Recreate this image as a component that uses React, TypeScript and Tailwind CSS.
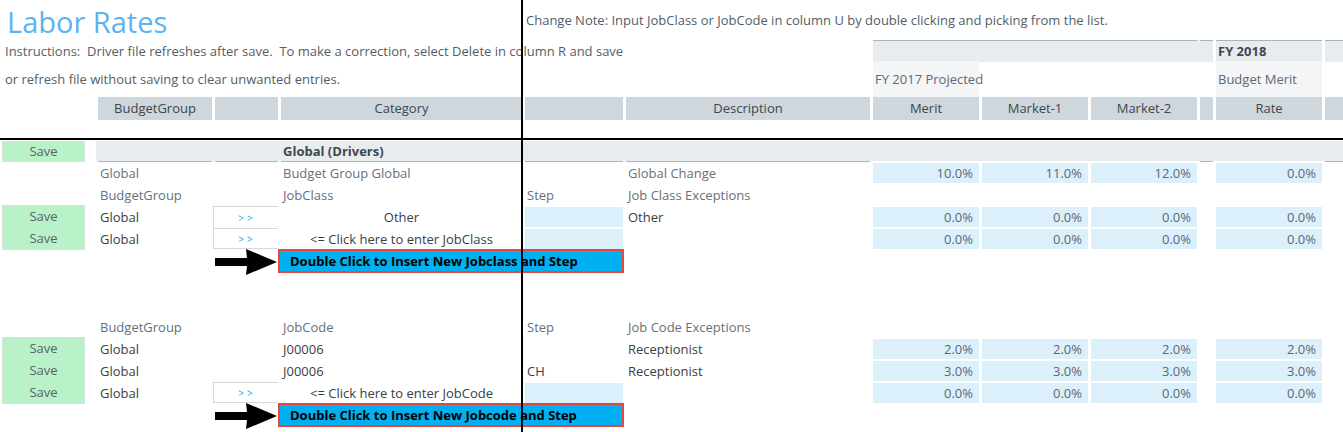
import React from "react";

const GRID =
  "grid grid-cols-[93px_114px_63px_241px_98px_244px_106px_106px_106px_13px_106px_18px] gap-x-[3px] pl-[2px]";

function Save({ first }: { first?: boolean }) {
  return (
    <div
      className={
        first
          ? "w-[83px] h-[21px] pt-[1px] bg-[#b9f1c9] border border-[#d2e6d6] flex items-center justify-center text-[#5b6168]"
          : "w-[83px] h-[23px] -mt-[2px] pt-[1px] bg-[#b9f1c9] border border-[#d2e6d6] flex items-center justify-center text-[#5b6168]"
      }
    >
      Save
    </div>
  );
}

function Pct({ v }: { v: string }) {
  return (
    <div className="h-[20px] pt-[1px] bg-[#dcf0fc] flex items-center justify-end pr-[6px] text-[#5d6772]">
      {v}
    </div>
  );
}

function Blue() {
  return <div className="h-[20px] bg-[#dcf0fc]" />;
}

function L({ t, dark, center }: { t?: string; dark?: boolean; center?: boolean }) {
  if (center) {
    return (
      <div className="h-[20px] pt-[1px] flex items-center justify-center whitespace-nowrap text-[#3a4046]">
        {t}
      </div>
    );
  }
  return dark ? (
    <div className="h-[20px] pt-[1px] flex items-center pl-[2px] whitespace-nowrap text-[#3a4046]">{t}</div>
  ) : (
    <div className="h-[20px] pt-[1px] flex items-center pl-[2px] whitespace-nowrap text-[#66707a]">{t}</div>
  );
}

function E() {
  return <div />;
}

function Tab({ last }: { last?: boolean }) {
  return (
    <div
      className={
        last
          ? "-ml-[2px] -mt-[1px] h-[21px] pt-[1px] bg-white border-l border-t border-b border-[#d5d9dc] flex items-center justify-center pl-[2px] text-[10px] text-[#1ea7e4] tracking-[3px]"
          : "-ml-[2px] -mt-[1px] h-[22px] pt-[1px] bg-white border-l border-t border-[#d5d9dc] flex items-center justify-center pl-[2px] text-[10px] text-[#1ea7e4] tracking-[3px]"
      }
    >
      &gt;&gt;
    </div>
  );
}

function Arrow() {
  return (
    <svg width="63" height="26" viewBox="0 0 63 26" className="overflow-visible">
      <polygon points="0,9 32,9 31,0 62,13 31,26 32,17 0,17" fill="#000" />
    </svg>
  );
}

function ButtonRow({ text }: { text: string }) {
  return (
    <div className={`${GRID} h-[24px]`}>
      <div />
      <div />
      <div className="flex items-start">
        <Arrow />
      </div>
      <div className="col-span-2 -ml-[3px] -mr-[1px] h-[24px] pt-[1px] bg-[#00b0f0] border-2 border-[#e8473e] flex items-center pl-[10px] font-bold text-black text-[13px] whitespace-nowrap">
        {text}
      </div>
    </div>
  );
}

function Hdr({ t }: { t?: string }) {
  return (
    <div className="h-[23px] pt-[1px] bg-[#ced7dd] flex items-center justify-center text-[#40464c] whitespace-nowrap">
      {t}
    </div>
  );
}

export default function App() {
  return (
    <div className="relative w-[1343px] h-[432px] overflow-hidden bg-white font-['Open_Sans',sans-serif] text-[13px] text-[#5f6973]">
      {/* Row 1 */}
      <div className={`${GRID} h-[40px]`}>
        <div className="col-start-1 col-span-4 pl-[5px] pt-[7px] text-[29px] leading-none text-[#5cb3f2] whitespace-nowrap">
          Labor Rates
        </div>
        <div className="col-start-5 col-span-8 flex items-center pt-[2px] pl-[1px] whitespace-nowrap text-[#555d66]">
          Change Note: Input JobClass or JobCode in column U by double clicking and picking from the list.
        </div>
      </div>

      {/* Row 2 */}
      <div className={`${GRID} h-[21px]`}>
        <div className="col-start-1 col-span-6 row-start-1 flex items-center pt-[1px] pl-[3px] whitespace-pre text-[#555d66]">
          {"Instructions:  Driver file refreshes after save.  To make a correction, select Delete in column R and save"}
        </div>
        <div className="col-start-7 col-end-11 row-start-1 bg-[#e8ecef]" />
        <div className="col-start-7 col-end-10 row-start-1 border-t border-[#a7b5c2]" />
        <div className="col-start-10 row-start-1 border-t border-[#a7b5c2]" />
        <div className="col-start-11 row-start-1 bg-[#e8ecef] border-t border-[#a7b5c2] flex items-center pt-[1px] pl-[2px] font-bold text-[#3e4852] whitespace-nowrap">
          FY 2018
        </div>
        <div className="col-start-12 row-start-1 bg-[#e8ecef] border-t border-[#a7b5c2]" />
      </div>

      {/* Row 3 */}
      <div className={`${GRID} h-[36px]`}>
        <div className="col-start-1 col-span-6 flex items-center pt-[1px] pl-[3px] whitespace-nowrap text-[#555d66]">
          or refresh file without saving to clear unwanted entries.
        </div>
        <div className="col-start-7 bg-[#f4f5f6] flex items-center pt-[2px] pl-[2px] whitespace-nowrap">
          FY 2017 Projected
        </div>
        <div className="col-start-11 bg-[#f4f5f6] flex items-center pt-[2px] pl-[2px] whitespace-nowrap">
          Budget Merit
        </div>
      </div>

      {/* Row 4 header */}
      <div className={`${GRID} h-[23px]`}>
        <div />
        <Hdr t="BudgetGroup" />
        <Hdr />
        <Hdr t="Category" />
        <Hdr />
        <Hdr t="Description" />
        <Hdr t="Merit" />
        <Hdr t="Market-1" />
        <Hdr t="Market-2" />
        <Hdr />
        <Hdr t="Rate" />
        <Hdr />
      </div>

      {/* Row 5 with freeze line */}
      <div className="h-[20px] border-b-2 border-black" />

      {/* Row 6 Global (Drivers) */}
      <div className={`${GRID} h-[23px] pt-[1px]`}>
        <div className="col-start-1 row-start-1">
          <Save first />
        </div>
        <div className="col-start-2 col-end-13 row-start-1 -ml-[2px] h-[20px] bg-[#e8ecef]" />
        <div className="col-start-2 row-start-1 h-[21px] border-b border-[#a7b5c2]" />
        <div className="col-start-3 row-start-1 h-[21px] border-b border-[#a7b5c2]" />
        <div className="col-start-4 row-start-1 h-[21px] border-b border-[#a7b5c2]" />
        <div className="col-start-5 row-start-1 h-[21px] border-b border-[#a7b5c2]" />
        <div className="col-start-6 row-start-1 h-[21px] border-b border-[#a7b5c2]" />
        <div className="col-start-10 row-start-1 h-[21px] border-b border-[#a7b5c2]" />
        <div className="col-start-12 row-start-1 h-[21px] border-b border-[#a7b5c2]" />
        <div className="col-start-4 row-start-1 h-[20px] pt-[1px] flex items-center pl-[2px] font-bold text-[#3e4852] whitespace-nowrap">
          Global (Drivers)
        </div>
      </div>

      {/* Row 7 */}
      <div className={`${GRID} h-[22px]`}>
        <E />
        <L t="Global" />
        <E />
        <L t="Budget Group Global" />
        <E />
        <L t="Global Change" />
        <Pct v="10.0%" />
        <Pct v="11.0%" />
        <Pct v="12.0%" />
        <E />
        <Pct v="0.0%" />
        <E />
      </div>

      {/* Row 8 */}
      <div className={`${GRID} h-[22px]`}>
        <E />
        <L t="BudgetGroup" />
        <E />
        <L t="JobClass" />
        <L t="Step" />
        <L t="Job Class Exceptions" />
      </div>

      {/* Row 9 */}
      <div className={`${GRID} h-[22px]`}>
        <Save />
        <L t="Global" dark />
        <Tab />
        <L t="Other" center />
        <Blue />
        <L t="Other" dark />
        <Pct v="0.0%" />
        <Pct v="0.0%" />
        <Pct v="0.0%" />
        <E />
        <Pct v="0.0%" />
        <E />
      </div>

      {/* Row 10 */}
      <div className={`${GRID} h-[20px]`}>
        <Save />
        <L t="Global" dark />
        <Tab last />
        <L t="<= Click here to enter JobClass" center />
        <Blue />
        <E />
        <Pct v="0.0%" />
        <Pct v="0.0%" />
        <Pct v="0.0%" />
        <E />
        <Pct v="0.0%" />
        <E />
      </div>

      {/* Row 11 */}
      <ButtonRow text="Double Click to Insert New Jobclass and Step" />

      {/* Spacer rows */}
      <div className="h-[44px]" />

      {/* Row 14 */}
      <div className={`${GRID} h-[22px]`}>
        <E />
        <L t="BudgetGroup" />
        <E />
        <L t="JobCode" />
        <L t="Step" />
        <L t="Job Code Exceptions" />
      </div>

      {/* Row 15 */}
      <div className={`${GRID} h-[22px]`}>
        <Save />
        <L t="Global" dark />
        <E />
        <L t="J00006" dark />
        <E />
        <L t="Receptionist" dark />
        <Pct v="2.0%" />
        <Pct v="2.0%" />
        <Pct v="2.0%" />
        <E />
        <Pct v="2.0%" />
        <E />
      </div>

      {/* Row 16 */}
      <div className={`${GRID} h-[22px]`}>
        <Save />
        <L t="Global" dark />
        <E />
        <L t="J00006" dark />
        <L t="CH" dark />
        <L t="Receptionist" dark />
        <Pct v="3.0%" />
        <Pct v="3.0%" />
        <Pct v="3.0%" />
        <E />
        <Pct v="3.0%" />
        <E />
      </div>

      {/* Row 17 */}
      <div className={`${GRID} h-[20px]`}>
        <Save />
        <L t="Global" dark />
        <Tab last />
        <L t="<= Click here to enter JobCode" center />
        <Blue />
        <E />
        <Pct v="0.0%" />
        <Pct v="0.0%" />
        <Pct v="0.0%" />
        <E />
        <Pct v="0.0%" />
        <E />
      </div>

      {/* Row 18 */}
      <ButtonRow text="Double Click to Insert New Jobcode and Step" />

      {/* Freeze pane vertical line */}
      <div className="absolute left-[521px] top-0 h-full w-[2px] bg-black" />
    </div>
  );
}
